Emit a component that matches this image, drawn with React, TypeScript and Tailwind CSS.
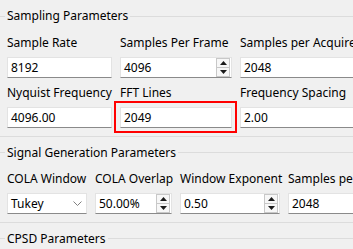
import type { ReactNode } from 'react';

const font = { fontFamily: '"Noto Sans", "Open Sans", sans-serif' };

function GroupTitle({ title, className }: { title: string; className: string }) {
  return (
    <div className={`flex items-center ${className}`}>
      <div className="h-px w-[5px] bg-[#dcdcdc]" />
      <span className="px-[2px] text-[12px] leading-none text-black">{title}</span>
      <div className="h-px flex-1 bg-[#dcdcdc]" />
    </div>
  );
}

function Spinner() {
  return (
    <div className="mr-[1px] flex h-[19px] w-[14px] flex-col border border-[#c8c8c8] bg-[#f7f7f7]">
      <div className="flex flex-1 items-center justify-center border-b border-[#c8c8c8]">
        <svg width="7" height="4" viewBox="0 0 7 4">
          <path d="M0 4 L3.5 0 L7 4 Z" fill="#1a1a1a" />
        </svg>
      </div>
      <div className="flex flex-1 items-center justify-center">
        <svg width="7" height="4" viewBox="0 0 7 4">
          <path d="M0 0 L3.5 4 L7 0 Z" fill="#1a1a1a" />
        </svg>
      </div>
    </div>
  );
}

function Field({ label, children, spin, combo }: { label: string; children: ReactNode; spin?: boolean; combo?: boolean }) {
  return (
    <div className="flex flex-col">
      <div className="flex h-[22px] items-center whitespace-nowrap text-[12px] text-black">{label}</div>
      <div className="mt-[3px] flex h-[21px] items-center border border-[#e3e3e3] border-b-[#8a8a8a] bg-white pl-[3px] text-[12px] text-black">
        <span className="flex-1 whitespace-nowrap">{children}</span>
        {spin ? <Spinner /> : null}
        {combo ? (
          <svg className="mr-[4px]" width="9" height="5" viewBox="0 0 9 5">
            <path d="M0.5 0.5 L4.5 4.5 L8.5 0.5" stroke="#808080" strokeWidth="1" fill="none" />
          </svg>
        ) : null}
      </div>
    </div>
  );
}

export default function App() {
  return (
    <div className="h-[249px] w-[353px] overflow-hidden bg-[#f0f0f0]" style={font}>
      <div className="w-[420px]">
        <section className="border-b border-[#dcdcdc] pb-[8px]">
          <GroupTitle title="Sampling Parameters" className="h-[32px]" />
          <div className="grid grid-cols-[105px_112px_150px] gap-x-[8px] pl-[7px]">
            <Field label="Sample Rate">8192</Field>
            <Field label="Samples Per Frame" spin>
              4096
            </Field>
            <Field label="Samples per Acquire">2048</Field>
          </div>
          <div className="mt-[4px] grid grid-cols-[105px_112px_150px] gap-x-[8px] pl-[7px]">
            <Field label="Nyquist Frequency">4096.00</Field>
            <div className="relative">
              <Field label="FFT Lines">2049</Field>
              <div className="pointer-events-none absolute bottom-[-5px] left-[-6px] right-[-5px] top-[19px] border-2 border-[#f00]" />
            </div>
            <Field label="Frequency Spacing">2.00</Field>
          </div>
        </section>

        <section className="border-b border-[#dcdcdc] pb-[8px]">
          <GroupTitle title="Signal Generation Parameters" className="h-[31px]" />
          <div className="grid grid-cols-[80px_77px_100px_120px] gap-x-[8px] pl-[7px]">
            <Field label="COLA Window" combo>
              Tukey
            </Field>
            <Field label="COLA Overlap" spin>
              50.00%
            </Field>
            <Field label="Window Exponent" spin>
              0.50
            </Field>
            <Field label="Samples per Segment">2048</Field>
          </div>
        </section>

        <section>
          <GroupTitle title="CPSD Parameters" className="h-[31px]" />
        </section>
      </div>
    </div>
  );
}
